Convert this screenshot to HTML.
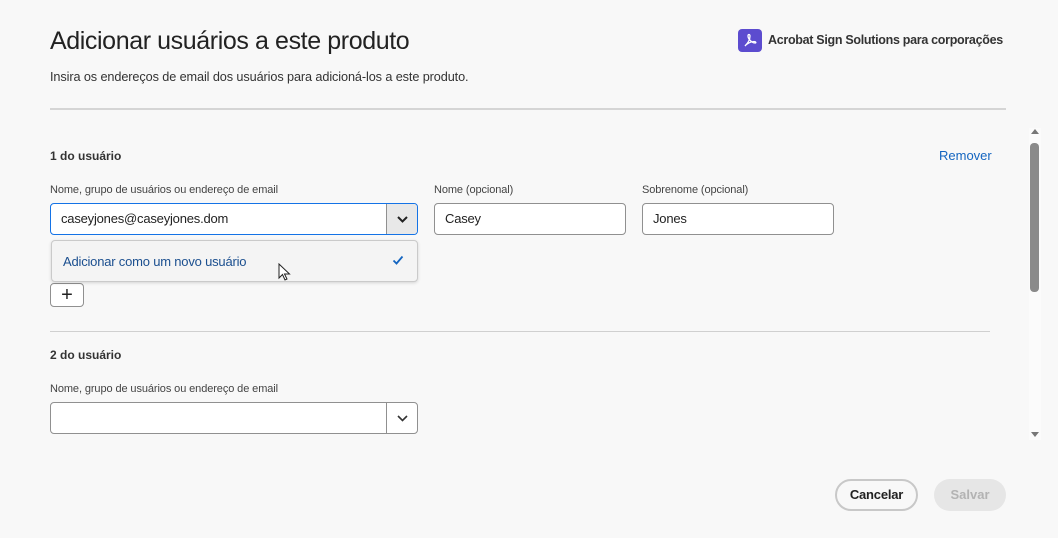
<!DOCTYPE html>
<html><head><style>
*{box-sizing:border-box;margin:0;padding:0}
body{width:1058px;height:538px;background:#f8f8f8;font-family:"Liberation Sans",sans-serif;color:#2c2c2c;position:relative;overflow:hidden}
.a{position:absolute}
h1{position:absolute;left:50px;top:27px;font-size:25px;font-weight:normal;color:#222;letter-spacing:-0.4px}
.lbl{font-size:11px;color:#444;letter-spacing:-0.1px}
.inp{position:absolute;height:32px;border:1px solid #909090;border-radius:4px;background:#fff;font-size:13px;padding:0 10px;line-height:30px;color:#222;letter-spacing:-0.2px}
.bold{font-weight:bold;font-size:12px;color:#333}
</style></head><body>
<h1>Adicionar usuários a este produto</h1>
<div class="a" style="left:50px;top:70px;font-size:12.7px;color:#333;letter-spacing:-0.1px">Insira os endereços de email dos usuários para adicioná-los a este produto.</div>
<div class="a" style="left:738px;top:29px;width:24px;height:23px;background:#5c4ccf;border-radius:4px"><svg width="24" height="23" viewBox="0 0 24 23"><path d="M7 17c3-3 5-7 5-10 0-2-2-2-2 0 0 3 4 7 7 7 1.5 0 1-1.5-1-1.5-3 0-7 2-9 4.5z" fill="none" stroke="#fff" stroke-width="1.3"/></svg></div>
<div class="a" style="left:768px;top:33px;font-size:12.5px;font-weight:bold;color:#333;letter-spacing:-0.3px">Acrobat Sign Solutions para corporações</div>
<div class="a" style="left:50px;top:108px;width:956px;height:2px;background:#d5d5d5"></div>

<div class="a bold" style="left:50px;top:149px">1 do usuário</div>
<div class="a" style="left:939px;top:148px;font-size:13px;color:#1465c0">Remover</div>
<div class="a lbl" style="left:50px;top:184px">Nome, grupo de usuários ou endereço de email</div>
<div class="a lbl" style="left:434px;top:184px">Nome (opcional)</div>
<div class="a lbl" style="left:642px;top:184px">Sobrenome (opcional)</div>
<div class="inp" style="left:50px;top:203px;width:368px;border-color:#1473e6">caseyjones@caseyjones.dom</div>
<div class="a" style="left:386px;top:204px;width:31px;height:30px;background:#e8e8e8;border-left:1px solid #909090;border-radius:0 3px 3px 0"><svg width="31" height="30"><path d="M11 13l4.5 4.5 4.5-4.5" fill="none" stroke="#222" stroke-width="2"/></svg></div>
<div class="inp" style="left:434px;top:203px;width:192px">Casey</div>
<div class="inp" style="left:642px;top:203px;width:192px">Jones</div>
<div class="a" style="left:50px;top:283px;width:34px;height:24px;border:1px solid #909090;border-radius:4px;background:#fff;text-align:center;font-size:20px;line-height:22px;color:#222">+</div>
<div class="a" style="left:51px;top:240px;width:367px;height:42px;background:#f4f4f4;border:1px solid #cacaca;border-radius:4px;box-shadow:0 1px 3px rgba(0,0,0,.15)"></div>
<div class="a" style="left:63px;top:254px;font-size:13px;color:#1b4f8f;letter-spacing:-0.2px">Adicionar como um novo usuário</div>
<svg class="a" style="left:392px;top:254px" width="12" height="12"><path d="M1.5 6.5l3 3 6-7" fill="none" stroke="#1465c0" stroke-width="1.8"/></svg>
<svg class="a" style="left:278px;top:263px" width="14" height="20"><path d="M1 1v14l3.5-3.5 2.5 5.5 2-1-2.5-5h5z" fill="#fff" stroke="#222" stroke-width="1"/></svg>

<div class="a" style="left:50px;top:331px;width:940px;height:1px;background:#d0d0d0"></div>
<div class="a bold" style="left:50px;top:348px">2 do usuário</div>
<div class="a lbl" style="left:50px;top:383px">Nome, grupo de usuários ou endereço de email</div>
<div class="inp" style="left:50px;top:402px;width:368px"></div>
<div class="a" style="left:386px;top:403px;width:31px;height:30px;border-left:1px solid #909090"><svg width="31" height="30"><path d="M11 13l4.5 4.5 4.5-4.5" fill="none" stroke="#333" stroke-width="1.6"/></svg></div>

<div class="a" style="left:1029px;top:128px;width:12px;height:312px;background:#fbfbfb"></div>
<svg class="a" style="left:1031px;top:128px" width="8" height="6"><path d="M0 6l4-5 4 5z" fill="#777"/></svg>
<div class="a" style="left:1030px;top:143px;width:9px;height:149px;background:#8a8a8a;border-radius:4px"></div>
<svg class="a" style="left:1031px;top:432px" width="8" height="6"><path d="M0 0l4 5 4-5z" fill="#777"/></svg>

<div class="a" style="left:835px;top:479px;width:83px;height:32px;border:2px solid #c8c8c8;border-radius:16px;text-align:center;line-height:28px;font-size:13px;font-weight:bold;color:#222;letter-spacing:-0.2px">Cancelar</div>
<div class="a" style="left:934px;top:479px;width:72px;height:32px;background:#e6e6e6;border-radius:16px;text-align:center;line-height:32px;font-size:13px;font-weight:bold;color:#b3b3b3">Salvar</div>
</body></html>
